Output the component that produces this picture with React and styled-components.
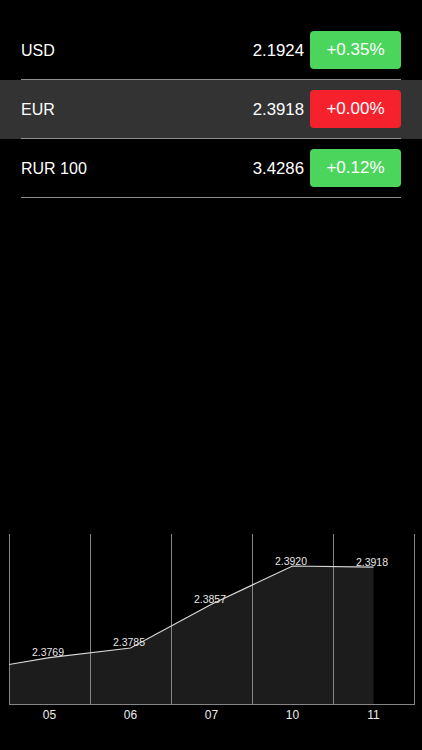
import React from "react";
import styled, { createGlobalStyle } from "styled-components";

const GlobalStyle = createGlobalStyle`
  html, body {
    margin: 0;
    padding: 0;
    background: #000;
  }
  body {
    font-family: "Liberation Sans", Arial, sans-serif;
    color: #fff;
  }
`;

const Page = styled.div`
  width: 422px;
  height: 750px;
  display: flex;
  flex-direction: column;
  background: #000;
  overflow: hidden;
`;

const List = styled.div`
  padding-top: 21px;
`;

const Row = styled.div`
  background: ${(props) => (props.selected ? "#333333" : "transparent")};
`;

const RowInner = styled.div`
  margin: 0 21px;
  height: 58px;
  display: flex;
  align-items: center;
  border-bottom: 1px solid #8f8f8f;
`;

const Name = styled.div`
  flex: 1;
  font-size: 16px;
  padding-top: 2px;
  color: #fff;
`;

const Value = styled.div`
  font-size: 16.8px;
  padding-top: 2px;
  color: #fff;
  margin-right: 6px;
`;

const Badge = styled.div`
  width: 91px;
  height: 38px;
  border-radius: 4px;
  background: ${(props) => (props.up ? "#4cd55c" : "#f5222d")};
  display: flex;
  align-items: center;
  justify-content: center;
  font-size: 17px;
  color: #fff;
`;

const ChartWrap = styled.div`
  margin-top: auto;
  margin-bottom: 20px;
  height: 200px;
`;

const rates = [
  { name: "USD", value: "2.1924", change: "+0.35%", up: true },
  { name: "EUR", value: "2.3918", change: "+0.00%", up: false, selected: true },
  { name: "RUR 100", value: "3.4286", change: "+0.12%", up: true },
];

const days = ["05", "06", "07", "10", "11"];
const values = [2.3769, 2.3785, 2.3857, 2.392, 2.3918];

const LEFT = 9;
const STEP = 81;
const TOP = 4;
const BOTTOM = 174;

const yOf = (v) => 36 - (v - 2.392) * 6074;

const Chart = () => {
  const pts = values.map((v, i) => [LEFT + STEP / 2 + STEP * i, yOf(v)]);
  const first = [LEFT, 134.5];
  const line = [first, ...pts];
  const last = pts[pts.length - 1];
  const area = [...line, [last[0], BOTTOM], [LEFT, BOTTOM]];
  const toStr = (arr) => arr.map((p) => p.join(",")).join(" ");

  return (
    <svg width="422" height="200" viewBox="0 0 422 200">
      <polygon points={toStr(area)} fill="#1c1c1c" />
      {[0, 1, 2, 3, 4, 5].map((i) => (
        <line
          key={i}
          x1={LEFT + STEP * i + 0.5}
          x2={LEFT + STEP * i + 0.5}
          y1={TOP}
          y2={BOTTOM}
          stroke="#858585"
          strokeWidth="1"
        />
      ))}
      <line x1={LEFT} x2={LEFT + STEP * 5 + 1} y1={BOTTOM + 0.5} y2={BOTTOM + 0.5} stroke="#858585" strokeWidth="1" />
      <polyline points={toStr(line)} fill="none" stroke="#d8d8d8" strokeWidth="1.2" />
      {pts.map((p, i) => (
        <text
          key={"v" + i}
          x={p[0] - 1.5}
          y={p[1] - 1.5}
          fill="#e6e6e6"
          fontSize="10.5"
          fontFamily="Liberation Sans, Arial, sans-serif"
          textAnchor="middle"
        >
          {values[i].toFixed(4)}
        </text>
      ))}
      {days.map((d, i) => (
        <text
          key={d}
          x={LEFT + STEP / 2 + STEP * i}
          y="189"
          fill="#ececec"
          fontSize="12"
          fontFamily="Liberation Sans, Arial, sans-serif"
          textAnchor="middle"
        >
          {d}
        </text>
      ))}
    </svg>
  );
};

export default function App() {
  return (
    <>
      <GlobalStyle />
      <Page>
        <List>
          {rates.map((r) => (
            <Row key={r.name} selected={r.selected}>
              <RowInner>
                <Name>{r.name}</Name>
                <Value>{r.value}</Value>
                <Badge up={r.up}>{r.change}</Badge>
              </RowInner>
            </Row>
          ))}
        </List>
        <ChartWrap>
          <Chart />
        </ChartWrap>
      </Page>
    </>
  );
}
